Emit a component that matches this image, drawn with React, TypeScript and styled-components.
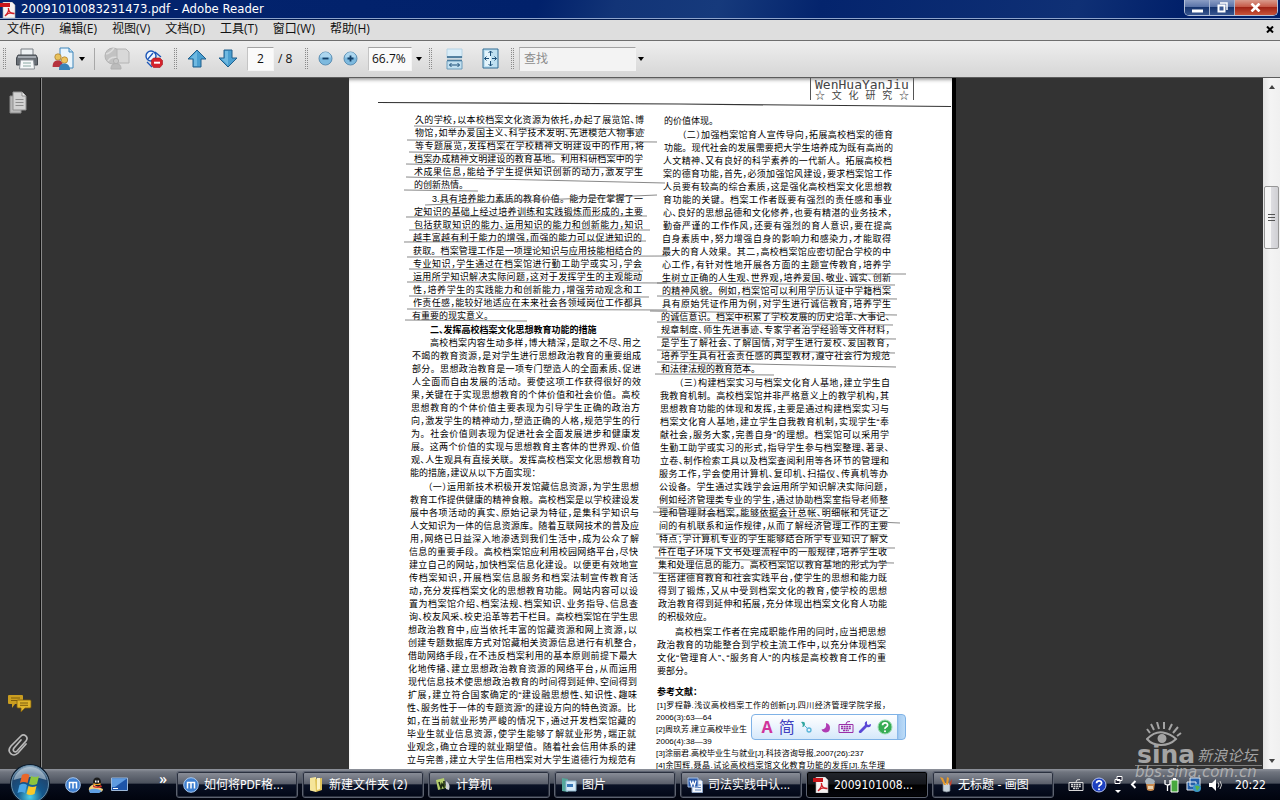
import React from "react";
import styled, { createGlobalStyle, css } from "styled-components";

const cjk = `"Noto Sans CJK SC", sans-serif`;
const uiFont = `"Open Sans", ${cjk}`;
const captionFont = `"DejaVu Sans Condensed", ${cjk}`;

const GlobalStyle = createGlobalStyle`
  * { box-sizing: border-box; }
  body { margin: 0; font-family: ${uiFont}; font-size: 12px; color: #111; overflow: hidden; }
  button, input, select { font: inherit; color: inherit; margin: 0; padding: 0; border: 0; background: none; border-radius: 0; }
  svg { display: block; }
`;

const Desktop = styled.div`
  position: relative;
  height: 100vh;
  display: flex;
  flex-direction: column;
  overflow: hidden;
  background: #333;
`;

/* ---------- title bar ---------- */

const TitleBar = styled.header`
  flex: none;
  height: 20px;
  display: flex;
  align-items: flex-start;
  background: linear-gradient(105deg, #04246e 0%, #01216b 42%, #123477 48%, #163a7c 56%, #04246d 64%, #0f3075 84%, #01206a 92%);
  border-bottom: 1px solid #021a4c;
  box-shadow: inset 0 -1px 0 #8ea4cc;
`;

const Title = styled.h1`
  flex: 1;
  margin: 0;
  padding-left: 4px;
  font-family: ${captionFont};
  font-size: 13px;
  font-weight: 400;
  line-height: 18px;
  color: #fff;
  white-space: nowrap;
`;

const AppIcon = styled.span`
  width: 17px;
  height: 18px;
  padding-top: 2px;
`;

const WindowButtons = styled.div`
  display: flex;
  height: 16px;
  margin-right: 2px;
  border: 1px solid #b4c0d8;
  border-top: 0;
  border-radius: 0 0 5px 5px;
  overflow: hidden;
`;

const WindowButton = styled.button<{ $close?: boolean }>`
  width: ${(p) => (p.$close ? 42 : 25)}px;
  display: flex;
  align-items: center;
  justify-content: center;
  border-right: 1px solid ${(p) => (p.$close ? "transparent" : "#a9b6d0")};
  background: ${(p) =>
    p.$close
      ? "linear-gradient(#d99a8c 0, #c65a48 45%, #a02416 50%, #c8543a 100%)"
      : "linear-gradient(#8b9dc4 0, #5a73a8 45%, #16346f 50%, #38568f 100%)"};
`;

/* ---------- menu bar ---------- */

const MenuBar = styled.nav`
  flex: none;
  height: 21px;
  display: flex;
  align-items: center;
  gap: 15px;
  padding: 0 6px 2px 7px;
  background: #dedede;
  border-bottom: 1px solid #6e6e6e;
`;

const MenuButton = styled.button`
  font-size: 12px;
  line-height: 18px;
  white-space: nowrap;
`;

const CloseDocument = styled.button`
  margin-left: auto;
`;

/* ---------- tool bar ---------- */

const ToolBar = styled.div`
  flex: none;
  height: 37px;
  display: flex;
  align-items: center;
  padding-bottom: 1px;
  background: linear-gradient(#eeeeee, #d6d6d6);
  border-bottom: 1px solid #5c5c5c;
`;

const Grip = styled.span`
  width: 3px;
  height: 21px;
  margin: 0 4px 0 3px;
  background-image: linear-gradient(transparent 1px, #e2e2e2 1px), linear-gradient(90deg, #8a8a8a 1px, transparent 1px);
  background-size: 2px 2px;
`;

const Rule = styled.span`
  width: 1px;
  height: 22px;
  margin: 0 2px;
  background: #a8a8a8;
`;

const ToolButton = styled.button<{ $width: number }>`
  width: ${(p) => p.$width}px;
  height: 30px;
  display: flex;
  align-items: center;
  justify-content: center;
  gap: 4px;
`;

const field = css`
  height: 24px;
  background: #fafafa;
  border: 1px solid #f4f4f4;
  border-top-color: #a2a2a2;
  border-left-color: #c4c4c4;
`;

const PageInput = styled.input`
  ${field}
  width: 27px;
  margin-left: 4px;
  text-align: center;
`;

const PageTotal = styled.span`
  width: 28px;
  padding-left: 4px;
  white-space: nowrap;
`;

const ZoomSelect = styled.select`
  ${field}
  width: 44px;
  margin-left: 6px;
  padding-left: 3px;
  appearance: none;
`;

const SearchInput = styled.input`
  ${field}
  width: 117px;
  margin-left: 1px;
  padding-left: 4px;
  background: #f3f3f3;
  &::placeholder { color: #8c8c8c; opacity: 1; }
`;

/* ---------- reading area ---------- */

const Workspace = styled.div`
  flex: 1;
  min-height: 0;
  display: flex;
  background: #333;
`;

const SidePanel = styled.aside`
  width: 42px;
  flex: none;
  display: flex;
  flex-direction: column;
  align-items: flex-start;
  gap: 20px;
  padding: 13px 0 12px 8px;
  border-right: 1px solid #8a8a8a;
  box-shadow: inset -1px 0 0 #111;
`;

const PanelButton = styled.button<{ $push?: boolean }>`
  margin-top: ${(p) => (p.$push ? "auto" : "0")};
`;

const Viewer = styled.main`
  flex: 1;
  min-width: 0;
  display: flex;
  justify-content: center;
  overflow: hidden;
`;

const Sheet = styled.article`
  position: relative;
  flex: none;
  width: 607px;
  background: #fff;
  border-right: 4px solid #000;
  box-shadow: inset 0 4px 4px -3px #777;
  font-family: "Liberation Sans", ${cjk};
  color: #000;
`;

const ScanMarks = styled.svg`
  position: absolute;
  inset: 0;
  width: 100%;
  height: 100%;
  fill: none;
  stroke: #6a6a6a;
`;

const RunningHead = styled.header`
  width: 104px;
  height: 22px;
  margin: 0 0 0 461px;
  padding: 0 4px;
  border: solid #555;
  border-width: 0 1px;
  color: #444;
`;

const HeadLatin = styled.div`
  font-family: "DejaVu Sans Mono", monospace;
  font-size: 13px;
  line-height: 13px;
  white-space: nowrap;
`;

const HeadChinese = styled.div`
  font-size: 10px;
  line-height: 10px;
  text-align: justify;
  text-align-last: justify;
`;

const Columns = styled.div`
  display: grid;
  grid-template-columns: 229px 229px;
  column-gap: 20px;
  padding: 14px 0 0 66px;
`;

const Column = styled.section<{ $drop?: boolean }>`
  padding-top: ${(p) => (p.$drop ? 1 : 0)}px;
`;

const Paragraph = styled.div<{ $space?: number }>`
  margin-top: ${(p) => p.$space ?? 1}px;
  &:first-child { margin-top: 0; }
`;

const Line = styled.div<{ $shift: number; $indent?: boolean; $last?: boolean; $bold?: boolean; $small?: boolean }>`
  margin-left: -${(p) => p.$shift}px;
  margin-right: ${(p) => p.$shift}px;
  padding-left: ${(p) => (p.$indent ? 18 : 0)}px;
  font-size: ${(p) => (p.$small ? 8 : 9)}px;
  line-height: ${(p) => (p.$small ? 12 : 13)}px;
  font-weight: ${(p) => (p.$bold ? 700 : 400)};
  font-feature-settings: "halt";
  white-space: nowrap;
  text-align: justify;
  text-align-last: ${(p) => (p.$last ? "left" : "justify")};
`;

const FullStop = styled.span`
  font-feature-settings: normal;
`;

/* ---------- scroll bar ---------- */

const ScrollBar = styled.div`
  flex: none;
  width: 17px;
  display: flex;
  flex-direction: column;
  align-items: center;
  background: linear-gradient(90deg, #e4e4e4, #f4f4f4 40%, #f0f0f0);
`;

const ScrollArrow = styled.button`
  width: 17px;
  height: 17px;
  display: flex;
  align-items: center;
  justify-content: center;
`;

const ScrollTrack = styled.div`
  flex: 1;
  width: 15px;
  padding-top: 91px;
`;

const ScrollThumb = styled.div`
  height: 63px;
  display: flex;
  flex-direction: column;
  align-items: center;
  justify-content: center;
  gap: 2px;
  border: 1px solid #979797;
  border-radius: 2px;
  background: linear-gradient(90deg, #f6f6f6 0 45%, #dcdce0 50%, #cfcfd3);
`;

const ThumbRidge = styled.span`
  width: 7px;
  height: 1px;
  background: #555;
`;

/* ---------- input method bar ---------- */

const ImeBar = styled.div`
  position: absolute;
  left: 751px;
  bottom: 60px;
  width: 155px;
  height: 26px;
  display: flex;
  align-items: center;
  justify-content: space-between;
  padding: 0 12px 0 7px;
  border: 1px solid #7fb2e6;
  border-radius: 4px;
  background: linear-gradient(90deg, transparent 145px, #7fb2e6 145px, #a8cdf2 147px, #bcdcf8), linear-gradient(#ffffff, #e9f3fd 55%, #d5e8fa);
`;

const ImeButton = styled.button<{ $color: string; $bold?: boolean }>`
  min-width: 16px;
  display: flex;
  justify-content: center;
  color: ${(p) => p.$color};
  font-size: 16px;
  font-weight: ${(p) => (p.$bold ? 700 : 400)};
  line-height: 20px;
`;

/* ---------- forum watermark ---------- */

const Watermark = styled.div`
  position: absolute;
  right: 18px;
  bottom: 21px;
  width: 127px;
  color: #b8b8b8;
  opacity: 0.85;
  pointer-events: none;
`;

const EyeMark = styled.div`
  height: 23px;
  padding-left: 11px;
`;

const Brand = styled.div`
  display: flex;
  align-items: center;
  gap: 2px;
  height: 20px;
  padding-left: 2px;
  white-space: nowrap;
`;

const BrandLatin = styled.span`
  font: 700 25px/18px "DejaVu Sans", sans-serif;
`;

const BrandChinese = styled.span`
  font: italic 15px/20px ${cjk};
`;

const BrandAddress = styled.div`
  font: italic 15px/13px "DejaVu Sans", sans-serif;
  border-top: 1px solid #8c8c8c;
  white-space: nowrap;
`;

/* ---------- task bar ---------- */

const TaskBar = styled.footer`
  flex: none;
  height: 31px;
  display: flex;
  align-items: center;
  padding-right: 14px;
  color: #fff;
  background: linear-gradient(#8f939c 0, #70757f 3px, #4b515d 45%, #060c1c 50%, #01040e 100%);
`;

const StartButton = styled.button`
  position: relative;
  flex: none;
  width: 60px;
  height: 31px;
  & > svg { position: absolute; left: 9px; bottom: -5px; }
`;

const QuickLaunch = styled.div`
  flex: none;
  width: 116px;
  display: flex;
  align-items: center;
  gap: 7px;
  padding-left: 5px;
`;

const MoreButton = styled.button`
  margin: 0 9px 12px auto;
  font-size: 14px;
  line-height: 16px;
  font-weight: 600;
`;

const TaskList = styled.div`
  flex: 1;
  min-width: 0;
  display: flex;
  gap: 4px;
`;

const TaskButton = styled.button<{ $active?: boolean }>`
  flex: 0 1 122px;
  min-width: 0;
  height: 27px;
  display: flex;
  align-items: center;
  gap: 5px;
  padding: 0 6px;
  border: 1px solid #5c6270;
  border-radius: 3px;
  box-shadow: inset 0 0 0 1px ${(p) => (p.$active ? "#000" : "#2a303e")};
  background: ${(p) =>
    p.$active
      ? "linear-gradient(#22252c 0, #15171c 48%, #000 52%, #04060c 100%)"
      : "linear-gradient(#8d919b 0, #5c616d 46%, #0a1226 52%, #020716 100%)"};
  font-family: ${captionFont};
  font-size: 12px;
  line-height: 20px;
  & > svg { flex: none; }
`;

const TaskLabel = styled.span`
  white-space: nowrap;
  overflow: hidden;
`;

const Tray = styled.div`
  flex: none;
  width: 198px;
  display: flex;
  align-items: center;
  justify-content: space-between;
`;

const Clock = styled.time`
  font-family: ${captionFont};
  font-size: 12px;
  line-height: 16px;
  padding-left: 6px;
`;

/* ---------- drawings ---------- */

const Caret = ({ color = "#000" }: { color?: string }) => (
  <svg width="6" height="4" viewBox="0 0 6 4"><path d="M0 0h6L3 4z" fill={color} /></svg>
);

const PdfIcon = () => (
  <svg width="16" height="16" viewBox="0 0 16 16">
    <path d="M3 0h9l3 3v13H3z" fill="#f6f2f2" stroke="#aaa" strokeWidth=".6" />
    <path d="M0 1h10v4H0z" fill="#c8141a" />
    <path d="M5 14c3-3 4-6 3.400-8M8.400 6c0 4 3 6 6 5.500M5.500 13.500c3-3 6-3 9-2" fill="none" stroke="#d02027" strokeWidth="1.300" />
  </svg>
);

const PrinterIcon = () => (
  <svg width="22" height="22" viewBox="0 0 22 22">
    <path d="M5 1h12v7H5z" fill="#eef2f5" stroke="#777c82" />
    <path d="M2 7h18l1.500 3v7H.5v-7z" fill="#686e75" stroke="#454a50" />
    <path d="M2 8h18v2H2z" fill="#a3a9b0" />
    <path d="M4.500 12h13l1 9h-15z" fill="#f7f9fa" stroke="#8a9096" />
    <path d="M7 15h8M7 18h8" stroke="#8aa8a2" />
  </svg>
);

const PeopleIcon = () => (
  <svg width="23" height="24" viewBox="0 0 23 24">
    <path d="M8 1h9l4 4v16H8z" fill="#eaf5fc" stroke="#3f86bb" />
    <path d="M17 1v4h4" fill="#bfe0f4" stroke="#3f86bb" />
    <circle cx="6" cy="10" r="3.200" fill="#e8c15b" stroke="#a87a2a" strokeWidth=".7" />
    <path d="M.6 20c0-5 2-6.500 5.400-6.500s5 2 5 6.500z" fill="#b5323e" />
    <circle cx="12.500" cy="13" r="3.200" fill="#efc55e" stroke="#a87a2a" strokeWidth=".7" />
    <path d="M7 23c0-4.500 2-6.500 5.500-6.500S18 19 18 23z" fill="#3a83b8" />
  </svg>
);

const GlobeIcon = () => (
  <svg width="26" height="24" viewBox="0 0 26 24">
    <circle cx="9" cy="9" r="8" fill="#c2c2c2" stroke="#b4b4b4" />
    <path d="M2 7c4-1 6-3 8-6M4 14c2-4 6-4 11-4" stroke="#dcdcdc" fill="none" strokeWidth="1.500" />
    <path d="M13 2h9l3 3v11H13z" fill="#d8d8d8" stroke="#b4b4b4" />
    <circle cx="12" cy="14" r="2.600" fill="#c9c9c9" stroke="#b0b0b0" />
    <path d="M7 22c0-4 2-5.500 5-5.500s5 1.500 5 5.500z" fill="#bcbcbc" stroke="#b0b0b0" />
  </svg>
);

const StopIcon = () => (
  <svg width="18" height="18" viewBox="0 0 18 18">
    <circle cx="6" cy="6" r="5" fill="#eef6ff" stroke="#1c56b8" strokeWidth="1.400" />
    <path d="M10 2l6 5M2 12l5 5M3 9l5-6" stroke="#1c56b8" strokeWidth="1.300" />
    <path d="M8.500 8h6.500l2.500 2.500v4L15 17.500H8.500L6.500 15v-5z" fill="#d5222b" stroke="#a3141c" strokeWidth=".6" />
    <path d="M9 12.700h6" stroke="#fff" strokeWidth="2" />
  </svg>
);

const ArrowIcon = ({ down }: { down?: boolean }) => (
  <svg width="20" height="19" viewBox="0 0 20 19">
    <path d={down ? "M6 1h8v8h5L10 18 1 9h5z" : "M6 18h8v-8h5L10 1 1 10h5z"} fill="#4a9fd0" stroke="#1f5f8c" />
    <path d={down ? "M7 2h3v14L3.500 9.800H7z" : "M7 17h3V2.500L3.500 9.200H7z"} fill="#7fc4e8" opacity=".7" />
  </svg>
);

const RoundIcon = ({ plus }: { plus?: boolean }) => (
  <svg width="15" height="15" viewBox="0 0 15 15">
    <circle cx="7.500" cy="7.500" r="6.500" fill="#7db9de" stroke="#5b8fb4" />
    <path d="M2 6.500a5.500 5.500 0 0 1 11 0z" fill="#b8ddf2" opacity=".8" />
    <path d={plus ? "M4.500 7.500h6M7.500 4.500v6" : "M4.500 7.500h6"} stroke="#123f68" strokeWidth="1.800" />
  </svg>
);

const FitWidthIcon = () => (
  <svg width="17" height="22" viewBox="0 0 17 22">
    <path d="M1 1h15v9H1z" fill="#d9edf8" stroke="#b4d2e4" />
    <path d="M1 9h15M1 12.500h15" stroke="#2b5f85" strokeWidth="1.400" />
    <path d="M1 13h15v8H1z" fill="#c2e0f0" stroke="#6d9cbb" />
    <path d="M3.500 17h10M5.500 15l-2 2 2 2M11.500 15l2 2-2 2" stroke="#1c4f78" fill="none" />
  </svg>
);

const FitPageIcon = () => (
  <svg width="17" height="21" viewBox="0 0 17 21">
    <path d="M1 1h15v19H1z" fill="#bfe0f1" stroke="#316c94" />
    <path d="M3 3h6v15H3z" fill="#e4f4fb" />
    <path d="M8.500 3v5M6.500 5l2-2 2 2M8.500 18v-5M6.500 16l2 2 2-2M2.500 10.500H7M4.500 8.500l-2 2 2 2M14.500 10.500H10M12.500 8.500l2 2-2 2" stroke="#1c4f78" fill="none" />
  </svg>
);

const PagesIcon = () => (
  <svg width="20" height="23" viewBox="0 0 20 23">
    <path d="M2 5h11v17H2z" fill="#b8b8b8" stroke="#8d8d8d" />
    <path d="M5 1h9l4 4v14H5z" fill="#d2d2d2" stroke="#8f8f8f" />
    <path d="M14 1v4h4" fill="#f0f0f0" stroke="#8f8f8f" />
    <path d="M7.500 8.500h8M7.500 11.500h8M7.500 14.500h8" stroke="#8d8d8d" />
  </svg>
);

const CommentsIcon = () => (
  <svg width="24" height="19" viewBox="0 0 24 19">
    <path d="M1 1h13q1 0 1 1v8H7l-3 4v-4H1q-1 0-1-1V2q0-1 1-1z" fill="#c99d20" />
    <path d="M3 4h9M3 6.500h6" stroke="#7d5d0c" />
    <path d="M10 6h12q1 0 1 1v6q0 1-1 1h-5l-4 4v-4h-3q-1 0-1-1V7q0-1 1-1z" fill="#e0b52c" stroke="#7d5d0c" strokeWidth=".8" />
    <path d="M12 9h8M12 11.300h8" stroke="#7d5d0c" />
  </svg>
);

const ClipIcon = () => (
  <svg width="22" height="24" viewBox="0 0 22 24">
    <path d="M13 7l-7 8c-2 3 1 5 3 3l9-10c3-4-2-8-5-5L3 13c-5 6 2 12 7 7l8-9" fill="none" stroke="#b9b9b9" strokeWidth="1.700" strokeLinecap="round" />
  </svg>
);

const Orb = () => (
  <svg width="42" height="42" viewBox="0 0 42 42">
    <defs>
      <radialGradient id="orb" cx=".5" cy=".85" r=".85">
        <stop offset="0" stopColor="#4fd0e8" />
        <stop offset=".4" stopColor="#14578c" />
        <stop offset=".75" stopColor="#1f456e" />
        <stop offset="1" stopColor="#9db5c8" />
      </radialGradient>
    </defs>
    <circle cx="21" cy="21" r="20" fill="#0a1a2c" />
    <circle cx="21" cy="21" r="18.500" fill="url(#orb)" stroke="#6a90ac" />
    <path d="M4.500 17a17 17 0 0 1 33 0q-16-6-33 0z" fill="#d4e2ea" opacity=".55" />
    <path d="M13 12q4-2.500 7.500 0l-2 8q-4-2-7.500 0z" fill="#e8672a" />
    <path d="M22 13q4 2 8 0l-2 8q-4 2-8 0z" fill="#8cc63e" />
    <path d="M10.500 22q4-2.500 7.500 0l-2 8q-3.500-2-7.500 0z" fill="#4ba6e6" />
    <path d="M19.500 23q4 2 8 0l-2 8q-4 2-8 0z" fill="#fbc928" />
  </svg>
);

const MaxthonIcon = () => (
  <svg width="16" height="16" viewBox="0 0 16 16">
    <circle cx="8" cy="8" r="7.300" fill="#3e7fd0" stroke="#a9c8ee" />
    <path d="M4.500 11.500v-6h7v6M8 6v5.500" fill="none" stroke="#fff" strokeWidth="1.500" />
  </svg>
);

const PenguinIcon = () => (
  <svg width="16" height="16" viewBox="0 0 16 16">
    <ellipse cx="9" cy="5" rx="4" ry="4.500" fill="#1b1b1b" />
    <path d="M7 3.500h1.500v2H7zM9.500 3.500H11v2H9.500z" fill="#fff" />
    <path d="M5.500 6q3.500 2 7 0v2h-7z" fill="#f3a024" />
    <path d="M1 11q4-6 7-2l7 3q0 3-4 3.500H2q-2-2-1-4.500z" fill="#f0cf7c" />
    <path d="M1 13q6-3 13 1l-3 2H2z" fill="#5f9fe4" />
    <path d="M5 8q4 3 8 0l1 2q-5 2-9 0z" fill="#d8332a" />
  </svg>
);

const ShowDesktopIcon = () => (
  <svg width="17" height="15" viewBox="0 0 17 15">
    <path d="M.5 1h16v12.500H.5z" fill="#1d54a8" stroke="#9db8d8" />
    <path d="M1 1.500h15L4 10H1z" fill="#5f9be0" />
    <path d="M2 11.500h5" stroke="#fff" />
  </svg>
);

const FolderIcon = () => (
  <svg width="15" height="17" viewBox="0 0 15 17">
    <path d="M1 2l6-1v15l-6-1.500z" fill="#f5e59a" />
    <path d="M6 3l7-1v12l-6 2z" fill="#e0c45c" />
    <path d="M8 2h3v11l-3 1z" fill="#fbf3c4" />
  </svg>
);

const ComputerIcon = () => (
  <svg width="16" height="16" viewBox="0 0 16 16">
    <path d="M1 3l8-2 2 10-8 2z" fill="#b5cf6c" />
    <path d="M4 5l2 6 1-4 2 3V4" stroke="#1c2a12" fill="none" strokeWidth="1.600" />
    <path d="M11 4q5 3 3 9l-3-1z" fill="#cfd2d6" />
  </svg>
);

const PictureIcon = () => (
  <svg width="16" height="16" viewBox="0 0 16 16">
    <path d="M1 1l6 1v13l-6-1z" fill="#55a79b" />
    <path d="M5 4h10v10H5z" fill="#d9ecf8" stroke="#8fb8d0" />
    <path d="M6 7h6v3H6z" fill="#3978b8" />
  </svg>
);

const WordIcon = () => (
  <svg width="16" height="16" viewBox="0 0 16 16">
    <path d="M5 3h9l1.500 1.500V15.500H5z" fill="#f4f7fb" stroke="#8ea6c8" />
    <path d="M8 8h6M8 10.500h6M8 13h6" stroke="#5b83bd" />
    <path d="M1 1h10v9H1z" fill="#2b5cad" stroke="#a7c0e4" />
    <path d="M3 3.500l1.500 5 1.500-4 1.500 4L9 3.500" fill="none" stroke="#fff" strokeWidth="1.200" />
  </svg>
);

const PaintIcon = () => (
  <svg width="14" height="17" viewBox="0 0 14 17">
    <path d="M4 7h7v8q-3 2-7 0z" fill="#c9d4dc" stroke="#73808a" strokeWidth=".7" />
    <path d="M5 9L1 1l3 1 3 7zM7 8l1-7 2 1-1 7z" fill="#e69a2c" />
    <path d="M10 8l3-5-1 7z" fill="#c6402a" />
  </svg>
);

const KeyboardIcon = ({ color = "#d8d8d8" }: { color?: string }) => (
  <svg width="16" height="14" viewBox="0 0 16 14">
    <path d="M8 4q0-3 4-2.500" stroke={color} fill="none" />
    <path d="M1 4.500h14v8H1z" fill="none" stroke={color} />
    <path d="M3 6.500h10M3 8.500h10M5 10.500h6" stroke={color} strokeWidth="1.300" strokeDasharray="2 .6" />
  </svg>
);

const HelpBadge = ({ fill, stroke }: { fill: string; stroke: string }) => (
  <svg width="16" height="16" viewBox="0 0 16 16">
    <circle cx="8" cy="8" r="7" fill={fill} stroke={stroke} />
    <path d="M5.500 6.300q.2-2.500 2.600-2.500t2.500 2.100q0 1.200-1.400 2T8 10" fill="none" stroke="#fff" strokeWidth="1.700" />
    <circle cx="8" cy="12.200" r="1" fill="#fff" />
  </svg>
);

/* ---------- document text ---------- */

type Para = { lines: string[]; indent?: boolean; bold?: boolean; small?: boolean; open?: boolean; space?: number };

const leftColumn: Para[] = [
  {
    lines: [
      "久的学校，以本校档案文化资源为依托，办起了展览馆、博",
      "物馆，如举办爱国主义、科学技术发明、先进模范人物事迹",
      "等专题展览，发挥档案在学校精神文明建设中的作用，将",
      "档案办成精神文明建设的教育基地。利用科研档案中的学",
      "术成果信息，能给予学生提供知识创新的动力，激发学生",
      "的创新热情。",
    ],
  },
  {
    indent: true,
    lines: [
      "3.具有培养能力素质的教育价值。能力是在掌握了一",
      "定知识的基础上经过培养训练和实践锻炼而形成的，主要",
      "包括获取知识的能力、运用知识的能力和创新能力，知识",
      "越丰富越有利于能力的增强，而强的能力可以促进知识的",
      "获取。档案管理工作是一项理论知识与应用技能相结合的",
      "专业知识，学生通过在档案馆进行勤工助学或实习，学会",
      "运用所学知识解决实际问题，这对于发挥学生的主观能动",
      "性，培养学生的实践能力和创新能力，增强劳动观念和工",
      "作责任感，能较好地适应在未来社会各领域岗位工作都具",
      "有重要的现实意义。",
    ],
  },
  { indent: true, bold: true, lines: ["二、发挥高校档案文化思想教育功能的措施"] },
  {
    indent: true,
    space: 0,
    lines: [
      "高校档案内容生动多样，博大精深，是取之不尽、用之",
      "不竭的教育资源，是对学生进行思想政治教育的重要组成",
      "部分。思想政治教育是一项专门塑造人的全面素质、促进",
      "人全面而自由发展的活动。要使这项工作获得很好的效",
      "果，关键在于实现思想教育的个体价值和社会价值。高校",
      "思想教育的个体价值主要表现为引导学生正确的政治方",
      "向，激发学生的精神动力，塑造正确的人格，规范学生的行",
      "为。社会价值则表现为促进社会全面发展进步和健康发",
      "展。这两个价值的实现与思想教育主客体的世界观、价值",
      "观、人生观具有直接关联。发挥高校档案文化思想教育功",
      "能的措施，建议从以下方面实现：",
    ],
  },
  {
    indent: true,
    open: true,
    lines: [
      "（一）运用新技术积极开发馆藏信息资源，为学生思想",
      "教育工作提供健康的精神食粮。高校档案是以学校建设发",
      "展中各项活动的真实、原始记录为特征，是集科学知识与",
      "人文知识为一体的信息资源库。随着互联网技术的普及应",
      "用，网络已日益深入地渗透到我们生活中，成为公众了解",
      "信息的重要手段。高校档案馆应利用校园网络平台，尽快",
      "建立自己的网站，加快档案信息化建设。以便更有效地宣",
      "传档案知识，开展档案信息服务和档案法制宣传教育活",
      "动，充分发挥档案文化的思想教育功能。网站内容可以设",
      "置为档案馆介绍、档案法规、档案知识、业务指导、信息查",
      "询、校友风采、校史沿革等若干栏目。高校档案馆在学生思",
      "想政治教育中，应当依托丰富的馆藏资源和网上资源，以",
      "创建专题数据库方式对馆藏相关资源信息进行有机整合，",
      "借助网络手段，在不违反档案利用的基本原则前提下最大",
      "化地传播、建立思想政治教育资源的网络平台，从而运用",
      "现代信息技术使思想政治教育的时间得到延伸、空间得到",
      "扩展，建立符合国家确定的“建设融思想性、知识性、趣味",
      "性、服务性于一体的专题资源”的建设方向的特色资源。比",
      "如，在当前就业形势严峻的情况下，通过开发档案馆藏的",
      "毕业生就业信息资源，使学生能够了解就业形势，端正就",
      "业观念，确立合理的就业期望值。随着社会信用体系的建",
      "立与完善，建立大学生信用档案对大学生道德行为规范有",
    ],
  },
];

const rightColumn: Para[] = [
  { lines: ["的价值体现。"] },
  {
    indent: true,
    lines: [
      "（二）加强档案馆育人宣传导向，拓展高校档案的德育",
      "功能。现代社会的发展需要把大学生培养成为既有高尚的",
      "人文精神、又有良好的科学素养的一代新人。拓展高校档",
      "案的德育功能，首先，必须加强馆风建设，要求档案馆工作",
      "人员要有较高的综合素质，这是强化高校档案文化思想教",
      "育功能的关键。档案工作者既要有强烈的责任感和事业",
      "心、良好的思想品德和文化修养，也要有精湛的业务技术，",
      "勤奋严谨的工作作风，还要有强烈的育人意识，要在提高",
      "自身素质中，努力增强自身的影响力和感染力，才能取得",
      "最大的育人效果。其二，高校档案馆应密切配合学校的中",
      "心工作，有针对性地开展各方面的主题宣传教育，培养学",
      "生树立正确的人生观、世界观，培养爱国、敬业、诚实、创新",
      "的精神风貌。例如，档案馆可以利用学历认证中学籍档案",
      "具有原始凭证作用为例，对学生进行诚信教育，培养学生",
      "的诚信意识。档案中积累了学校发展的历史沿革、大事记、",
      "规章制度、师生先进事迹、专家学者治学经验等文件材料，",
      "是学生了解社会、了解国情，对学生进行爱校、爱国教育，",
      "培养学生具有社会责任感的典型教材，遵守社会行为规范",
      "和法律法规的教育范本。",
    ],
  },
  {
    indent: true,
    lines: [
      "（三）构建档案实习与档案文化育人基地，建立学生自",
      "我教育机制。高校档案馆并非严格意义上的教学机构，其",
      "思想教育功能的体现和发挥，主要是通过构建档案实习与",
      "档案文化育人基地，建立学生自我教育机制，实现学生“奉",
      "献社会，服务大家，完善自身”的理想。档案馆可以采用学",
      "生勤工助学或实习的形式，指导学生参与档案整理、著录、",
      "立卷、制作检索工具以及档案查阅利用等各环节的管理和",
      "服务工作，学会使用计算机、复印机、扫描仪、传真机等办",
      "公设备。学生通过实践学会运用所学知识解决实际问题，",
      "例如经济管理类专业的学生，通过协助档案室指导老师整",
      "理和管理财会档案，能够依据会计总帐、明细帐和凭证之",
      "间的有机联系和运作规律，从而了解经济管理工作的主要",
      "特点；学计算机专业的学生能够结合所学专业知识了解文",
      "件在电子环境下文书处理流程中的一般规律，培养学生收",
      "集和处理信息的能力。高校档案馆以教育基地的形式为学",
      "生搭建德育教育和社会实践平台，使学生的思想和能力既",
      "得到了锻炼，又从中受到档案文化的教育，使学校的思想",
      "政治教育得到延伸和拓展，充分体现出档案文化育人功能",
      "的积极效应。",
    ],
  },
  {
    indent: true,
    space: 2,
    lines: [
      "高校档案工作者在完成职能作用的同时，应当把思想",
      "政治教育的功能整合到学校主流工作中，以充分体现档案",
      "文化“管理育人”、“服务育人”的内核是高校教育工作的重",
      "要部分。",
    ],
  },
  { bold: true, space: 8, lines: ["参考文献："] },
  {
    small: true,
    lines: ["[1]罗程静.浅议高校档案工作的创新[J].四川经济管理学院学报，", "2006(3):63—64"],
  },
  { small: true, space: 0, lines: ["[2]周玖芳.建立高校毕业生"] },
  { small: true, space: 0, lines: ["2006(4):38—39"] },
  { small: true, space: 0, lines: ["[3]涂丽君.高校毕业生与就业[J].科技咨询导报,2007(26):237"] },
  { small: true, space: 0, open: true, lines: ["[4]余国辉,聂晶.试论高校档案馆文化教育功能的发挥[J].东华理"] },
];

/* commas are set half width, full stops inside a line keep their full width */
const typeset = (text: string) =>
  text.split(/(。)(?=.)/).map((part, i) => (part === "。" ? <FullStop key={i}>。</FullStop> : part));

const TextColumn = ({ paras }: { paras: Para[] }) => {
  let row = 0;
  return (
    <>
      {paras.map((p, i) => (
        <Paragraph key={i} $space={p.space}>
          {p.lines.map((text, j) => (
            <Line
              key={j}
              $shift={Math.round(row++ / 6)}
              $indent={p.indent && j === 0}
              $last={!p.open && j === p.lines.length - 1}
              $bold={p.bold}
              $small={p.small}
            >
              {typeset(text)}
            </Line>
          ))}
        </Paragraph>
      ))}
    </>
  );
};

/* pen strokes under the text: x1, y1, x2, y2 on the sheet */
const strokes = [
  [65, 48, 296, 52], [58, 62, 308, 64], [60, 74, 284, 77], [57, 86, 294, 90], [57, 99, 316, 105],
  [55, 112, 129, 113], [76, 127, 308, 117], [57, 139, 298, 138], [60, 152, 301, 152], [55, 164, 297, 163],
  [58, 179, 318, 178], [60, 191, 294, 193], [58, 204, 318, 205], [60, 218, 300, 219], [58, 231, 318, 232],
  [56, 242, 178, 243], [500, 196, 557, 196], [308, 205, 546, 207], [308, 218, 548, 221], [301, 233, 548, 237],
  [308, 244, 544, 247], [308, 259, 547, 261], [308, 272, 546, 275], [308, 284, 547, 289], [306, 296, 425, 297],
  [308, 429, 541, 430], [304, 434, 551, 445], [307, 456, 538, 457], [304, 469, 546, 470], [306, 480, 545, 485],
  [304, 495, 413, 497],
];

const menus = ["文件(F)", "编辑(E)", "视图(V)", "文档(D)", "工具(T)", "窗口(W)", "帮助(H)"];

const tasks = [
  { label: "如何将PDF格...", icon: <MaxthonIcon /> },
  { label: "新建文件夹 (2)", icon: <FolderIcon /> },
  { label: "计算机", icon: <ComputerIcon /> },
  { label: "图片", icon: <PictureIcon /> },
  { label: "司法实践中认...", icon: <WordIcon /> },
  { label: "2009101008...", icon: <PdfIcon />, active: true },
  { label: "无标题 - 画图", icon: <PaintIcon /> },
];

export default function App() {
  return (
    <Desktop>
      <GlobalStyle />
      <TitleBar>
        <AppIcon><PdfIcon /></AppIcon>
        <Title>20091010083231473.pdf - Adobe Reader</Title>
        <WindowButtons>
          <WindowButton aria-label="最小化">
            <svg width="11" height="12" viewBox="0 0 11 12"><path d="M0 7.500h11v3H0z" fill="#fff" /></svg>
          </WindowButton>
          <WindowButton aria-label="还原">
            <svg width="11" height="11" viewBox="0 0 11 11">
              <path d="M3 1h7v7" fill="none" stroke="#fff" strokeWidth="1.500" />
              <path d="M1.500 3.500h6v6h-6z" fill="#3c5a94" stroke="#fff" strokeWidth="2" />
            </svg>
          </WindowButton>
          <WindowButton aria-label="关闭" $close>
            <svg width="11" height="9" viewBox="0 0 11 9"><path d="M1.500.5l8 8M9.500.5l-8 8" stroke="#fff" strokeWidth="2.600" /></svg>
          </WindowButton>
        </WindowButtons>
      </TitleBar>

      <MenuBar>
        {menus.map((m) => <MenuButton key={m}>{m}</MenuButton>)}
        <CloseDocument aria-label="关闭文档">
          <svg width="8" height="7" viewBox="0 0 8 7"><path d="M1 .5l6 6M7 .5l-6 6" stroke="#000" strokeWidth="2" /></svg>
        </CloseDocument>
      </MenuBar>

      <ToolBar>
        <Grip />
        <ToolButton $width={34} aria-label="打印"><PrinterIcon /></ToolButton>
        <ToolButton $width={48} aria-label="协作"><PeopleIcon /><Caret /></ToolButton>
        <Rule />
        <ToolButton $width={40} aria-label="共享"><GlobeIcon /></ToolButton>
        <ToolButton $width={34} aria-label="停止"><StopIcon /></ToolButton>
        <Grip />
        <ToolButton $width={32} aria-label="上一页"><ArrowIcon /></ToolButton>
        <ToolButton $width={30} aria-label="下一页"><ArrowIcon down /></ToolButton>
        <PageInput aria-label="页码" defaultValue="2" />
        <PageTotal>/ 8</PageTotal>
        <Grip />
        <ToolButton $width={26} aria-label="缩小"><RoundIcon /></ToolButton>
        <ToolButton $width={24} aria-label="放大"><RoundIcon plus /></ToolButton>
        <ZoomSelect aria-label="缩放比例"><option>66.7%</option></ZoomSelect>
        <ToolButton $width={14} aria-label="缩放选项"><Caret /></ToolButton>
        <Grip />
        <ToolButton $width={36} aria-label="适合宽度"><FitWidthIcon /></ToolButton>
        <ToolButton $width={36} aria-label="适合页面"><FitPageIcon /></ToolButton>
        <Grip />
        <SearchInput aria-label="查找" placeholder="查找" />
        <ToolButton $width={10} aria-label="查找选项"><Caret /></ToolButton>
      </ToolBar>

      <Workspace>
        <SidePanel>
          <PanelButton aria-label="页面"><PagesIcon /></PanelButton>
          <PanelButton $push aria-label="注释"><CommentsIcon /></PanelButton>
          <PanelButton aria-label="附件"><ClipIcon /></PanelButton>
        </SidePanel>
        <Viewer>
          <Sheet>
            <RunningHead>
              <HeadLatin>WenHuaYanJiu</HeadLatin>
              <HeadChinese>☆文化研究☆</HeadChinese>
            </RunningHead>
            <Columns>
              <Column><TextColumn paras={leftColumn} /></Column>
              <Column $drop><TextColumn paras={rightColumn} /></Column>
            </Columns>
            <ScanMarks aria-hidden="true">
              <path d="M29 24.500L330 26L602 28.500" stroke="#333" strokeWidth="1.200" />
              {strokes.map(([x1, y1, x2, y2], i) => (
                <path key={i} d={`M${x1} ${y1}L${x2} ${y2}`} strokeWidth=".8" />
              ))}
            </ScanMarks>
          </Sheet>
        </Viewer>
        <ScrollBar>
          <ScrollArrow aria-label="向上滚动">
            <svg width="6" height="4" viewBox="0 0 6 4"><path d="M0 4h6L3 0z" fill="#444" /></svg>
          </ScrollArrow>
          <ScrollTrack>
            <ScrollThumb><ThumbRidge /><ThumbRidge /><ThumbRidge /></ScrollThumb>
          </ScrollTrack>
          <ScrollArrow aria-label="向下滚动"><Caret color="#444" /></ScrollArrow>
        </ScrollBar>
      </Workspace>

      <TaskBar>
        <StartButton aria-label="开始"><Orb /></StartButton>
        <QuickLaunch>
          <MaxthonIcon />
          <PenguinIcon />
          <ShowDesktopIcon />
          <MoreButton>»</MoreButton>
        </QuickLaunch>
        <TaskList>
          {tasks.map((t) => (
            <TaskButton key={t.label} $active={t.active}>
              {t.icon}
              <TaskLabel>{t.label}</TaskLabel>
            </TaskButton>
          ))}
        </TaskList>
        <Tray>
          <KeyboardIcon />
          <HelpBadge fill="#1c3fc0" stroke="#b8c4f0" />
          <svg width="9" height="20" viewBox="0 0 9 20">
            <path d="M3 1.500h5v4H3zM1 4.500h5v4H1z" fill="#223" stroke="#fff" />
            <path d="M1 15h6l-3 3z" fill="#fff" />
          </svg>
          <svg width="7" height="9" viewBox="0 0 7 9"><path d="M5.500 1L2 4.500 5.500 8" fill="none" stroke="#fff" strokeWidth="2" /></svg>
          <svg width="13" height="15" viewBox="0 0 13 15">
            <path d="M2 6h9l-1 7q-3.500 2-7 0z" fill="#c98a4e" />
            <path d="M1 4q2-4 5-3t5 3l-1 3H2z" fill="#a9b4bd" />
            <path d="M4 9h5v3H4z" fill="#e9d2b0" />
          </svg>
          <svg width="15" height="16" viewBox="0 0 15 16">
            <path d="M7 3h7v12H7z" fill="#48a83e" stroke="#fff" />
            <path d="M9 1h3v2H9z" fill="#fff" />
            <path d="M1 3v4q3 2 5 0V3M3.500 8v6" fill="none" stroke="#fff" strokeWidth="1.300" />
          </svg>
          <svg width="16" height="16" viewBox="0 0 16 16">
            <path d="M4 1h10v8H4zM1 5h9v8H1z" fill="#245ea8" stroke="#e4ecf4" />
            <circle cx="11" cy="11" r="4" fill="#3c96c8" />
            <path d="M9 9q3-1 5 1l-3 4z" fill="#57b14c" />
          </svg>
          <svg width="13" height="14" viewBox="0 0 13 14">
            <path d="M0 5h3l4-4v12L3 9H0z" fill="#fff" />
            <path d="M9 4.500q2 2.500 0 5M11 3q3 4 0 8" fill="none" stroke="#ccc" />
          </svg>
          <Clock>20:22</Clock>
        </Tray>
      </TaskBar>

      <ImeBar>
        <ImeButton $color="#d0349a" $bold>A</ImeButton>
        <ImeButton $color="#4040c0">简</ImeButton>
        <ImeButton $color="#38a8b8" aria-label="标点">
          <svg width="12" height="12" viewBox="0 0 12 12">
            <path d="M1 1q4-1 4 2T2 6q2-2-1-5z" fill="#2fa6a0" />
            <circle cx="9" cy="9" r="2" fill="none" stroke="#58b4d8" strokeWidth="1.300" />
            <path d="M5 5l2 2" stroke="#58b4d8" />
          </svg>
        </ImeButton>
        <ImeButton $color="#a03ab8" aria-label="半角">
          <svg width="10" height="11" viewBox="0 0 10 11"><path d="M5 1q4 1 4 5t-4 4.500q-3.500 0-4.500-3Q6 7 5 1z" fill="#b03cb4" /></svg>
        </ImeButton>
        <ImeButton $color="#9a3cb0" aria-label="软键盘"><KeyboardIcon color="#9a2fa8" /></ImeButton>
        <ImeButton $color="#5a4ad8" aria-label="设置">
          <svg width="14" height="14" viewBox="0 0 14 14">
            <path d="M9 1q-3 1-2 4L1 11q-1 2 2 2l6-6q4 1 4-3l-3 1-1-1z" fill="#5a48d6" />
          </svg>
        </ImeButton>
        <ImeButton $color="#2c9c4c" aria-label="帮助"><HelpBadge fill="#36ac54" stroke="#9cdcb0" /></ImeButton>
      </ImeBar>

      <Watermark>
        <EyeMark>
          <svg width="36" height="24" viewBox="0 0 36 24" fill="none" stroke="currentColor" strokeWidth="2">
            <path d="M1 17Q9 9 17 10.500T30 17Q24 23 15 23T1 17z" />
            <circle cx="16" cy="16.500" r="3.500" fill="currentColor" />
            <path d="M4 11L1 7M8 8L5 2M13 7L11 0M18 7V0M23 8l3-6M27 11l5-6M31 14l4-3" />
          </svg>
        </EyeMark>
        <Brand>
          <BrandLatin>sina</BrandLatin>
          <BrandChinese>新浪论坛</BrandChinese>
        </Brand>
        <BrandAddress>bbs.sina.com.cn</BrandAddress>
      </Watermark>
    </Desktop>
  );
}
